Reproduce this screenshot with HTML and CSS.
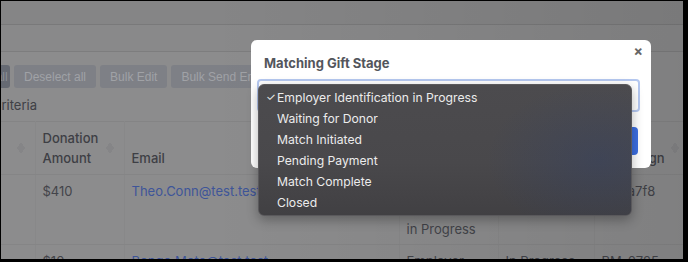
FILE: index.html
```html
<!DOCTYPE html>
<html>
<head>
<meta charset="utf-8">
<link rel="stylesheet" href="styles.css">
</head>
<body>
<div class="screen">
  <div class="topbar"></div>
  <div class="subbar"></div>
  <div class="toolbar">
    <span class="btn btn-primary">Select all</span>
    <span class="btn">Deselect all</span>
    <span class="btn">Bulk Edit</span>
    <span class="btn">Bulk Send Emails</span>
  </div>
  <div class="criteria">Criteria</div>
  <table class="grid">
    <colgroup>
      <col class="c0"><col class="c1"><col class="c2"><col class="c3"><col class="c4"><col class="c5">
    </colgroup>
    <thead>
      <tr>
        <th><span class="sort"></span></th>
        <th>Donation<br>Amount<span class="sort"></span></th>
        <th class="bottom">Email</th>
        <th class="bottom">Stage</th>
        <th class="bottom">Status</th>
        <th class="bottom">Campaign<span class="sort"></span></th>
      </tr>
    </thead>
    <tbody>
      <tr>
        <td></td>
        <td>$410</td>
        <td><span class="link">Theo.Conn@test.test</span></td>
        <td>Employer<br>Identification<br>in Progress</td>
        <td>In Progress</td>
        <td>BM-a7f8</td>
      </tr>
      <tr>
        <td></td>
        <td>$10</td>
        <td><span class="link">Bongo.Mota@test.test</span></td>
        <td>Employer</td>
        <td>In Progress</td>
        <td>BM-0725</td>
      </tr>
    </tbody>
  </table>
  <div class="vignette"></div>

  <div class="modal">
    <div class="modal-title">Matching Gift Stage</div>
    <span class="close">×</span>
    <div class="select"></div>
    <div class="modal-actions"><span class="save"></span></div>
  </div>

  <ul class="menu">
    <li class="checked"><span class="check">✓</span>Employer Identification in Progress</li>
    <li>Waiting for Donor</li>
    <li>Match Initiated</li>
    <li>Pending Payment</li>
    <li>Match Complete</li>
    <li>Closed</li>
  </ul>
</div>
</body>
</html>
```

FILE: styles.css
```css
* { box-sizing: border-box; }
html, body { margin: 0; padding: 0; background: #000; }
body {
  width: 688px;
  height: 262px;
  padding: 1px 5px 3px 1px;
  font-family: "Inter", "Liberation Sans", sans-serif;
}
.screen {
  position: relative;
  width: 682px;
  height: 258px;
  overflow: hidden;
  background: #8c8c8d;
  color: #404147;
  font-size: 13px;
}
.topbar {
  height: 24px;
  background: #858586;
  border-bottom: 1px solid #79797a;
}
.subbar {
  height: 27px;
  background: #89898a;
  border-bottom: 1px solid #7d7d7e;
}
.toolbar {
  display: flex;
  gap: 4px;
  margin: 13px 0 0 -52px;
  height: 23px;
}
.btn {
  display: flex;
  align-items: center;
  padding: 0 10px;
  border-radius: 3px;
  background: #7e8086;
  color: #a0a2a6;
  font-family: "Liberation Sans", "Inter", sans-serif;
  font-size: 12px;
  white-space: nowrap;
}
.btn-primary { background: #666a73; color: #8c8f95; width: 61px; overflow: hidden; }
.criteria {
  margin: 9px 0 0 -9px;
  line-height: 16px;
  color: #3f4045;
}
.grid {
  margin: 8px 0 0 -42px;
  border-collapse: collapse;
  table-layout: fixed;
  width: 730px;
  border-top: 1px solid #848485;
}
.c0 { width: 76px; }
.c1 { width: 89px; }
.c2 { width: 275px; }
.c3 { width: 99px; }
.c4 { width: 96px; }
.c5 { width: 95px; }
th, td {
  position: relative;
  text-align: left;
  vertical-align: top;
  padding: 6px 7px;
  border-right: 1px solid #888889;
  border-bottom: 1px solid #858586;
}
th {
  line-height: 20px;
  font-weight: 500;
  color: #3e3f45;
}
th.bottom { vertical-align: bottom; }
td {
  padding: 7px 7px 5px;
  line-height: 19px;
  color: #43444a;
}
.link { color: #3e5599; }
.sort {
  position: absolute;
  right: 10px;
  top: 20px;
  width: 8px;
  height: 12px;
  background:
    linear-gradient(to bottom right, transparent 50%, #858587 50%) 0 0 / 4px 6px no-repeat,
    linear-gradient(to bottom left, transparent 50%, #858587 50%) 4px 0 / 4px 6px no-repeat,
    linear-gradient(to top right, transparent 50%, #858587 50%) 0 6px / 4px 6px no-repeat,
    linear-gradient(to top left, transparent 50%, #858587 50%) 4px 6px / 4px 6px no-repeat;
}
.vignette {
  position: absolute;
  inset: 0;
  background: linear-gradient(90deg, rgba(0,0,0,0) 30%, rgba(0,0,0,0.09) 100%);
  pointer-events: none;
}
.modal {
  position: absolute;
  left: 250px;
  top: 39px;
  width: 400px;
  height: 128px;
  background: #fff;
  border-radius: 6px;
  padding: 14px 13px 0 13px;
}
.modal-title {
  font-weight: 700;
  font-size: 13px;
  color: #53565c;
  line-height: 18px;
}
.close {
  position: absolute;
  right: 8px;
  top: 2px;
  font-size: 14px;
  font-weight: 700;
  color: #666;
}
.select {
  margin: 7px -2px 0 -7px;
  height: 33px;
  border: 2px solid #b5c8f0;
  border-radius: 4px;
}
.modal-actions {
  display: flex;
  justify-content: flex-end;
  margin: 15px 0 0 0;
}
.save {
  width: 60px;
  height: 28px;
  background: #3c6ee0;
  border-radius: 4px;
}
.menu {
  position: absolute;
  left: 257px;
  top: 83px;
  width: 374px;
  height: 132px;
  margin: 0;
  padding: 2px 0 0 0;
  list-style: none;
  border-radius: 6px;
  background:
    radial-gradient(ellipse 160px 110px at 340px 75px, rgba(40,60,110,0.3), rgba(40,60,110,0) 70%),
    linear-gradient(180deg, #4c4b4e 0%, #49484b 60%, #414043 100%);
  border: 1px solid #5a595c;
  box-shadow: 0 4px 12px rgba(0,0,0,0.3);
  color: #ececec;
  font-size: 12.2px;
}
.menu li {
  height: 21px;
  line-height: 21px;
  padding-left: 18px;
  position: relative;
}
.check {
  position: absolute;
  left: 7px;
  font-size: 11px;
}
```
